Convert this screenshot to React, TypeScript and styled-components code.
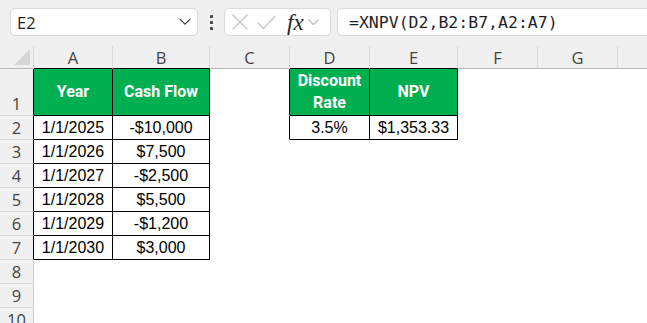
import React from "react";
import styled, { createGlobalStyle } from "styled-components";

const GlobalStyle = createGlobalStyle`
  html, body { margin: 0; padding: 0; background: #ffffff; }
  body { font-family: "Liberation Sans", Arial, sans-serif; }
  * { box-sizing: border-box; }
`;

const Page = styled.div`
  width: 647px;
  height: 323px;
  overflow: hidden;
  background: #ffffff;
  display: flex;
  flex-direction: column;
`;

const TopBar = styled.div`
  height: 46px;
  flex: none;
  background: #f0f0f0;
  display: flex;
  align-items: flex-start;
  padding: 8px 0 0 10px;
`;

const NameBox = styled.div`
  width: 188px;
  height: 28px;
  background: #ffffff;
  border: 1px solid #dadada;
  border-radius: 5px;
  display: flex;
  align-items: center;
  justify-content: space-between;
  padding: 0 6px 0 6px;
  font-family: "Open Sans", "Noto Sans", sans-serif;
  font-size: 16.5px;
  color: #1f1f1f;
`;

const Dots = styled.div`
  width: 26px;
  height: 28px;
  display: flex;
  flex-direction: column;
  align-items: center;
  justify-content: center;
  gap: 3px;
`;

const Dot = styled.span`
  width: 3px;
  height: 3px;
  background: #4a4a4a;
  border-radius: 0.5px;
`;

const FxBox = styled.div`
  width: 107px;
  height: 28px;
  background: #ffffff;
  border: 1px solid #dadada;
  border-radius: 5px;
  display: flex;
  align-items: center;
  padding: 0 4px 0 7px;
  gap: 9px;
`;

const FxText = styled.span`
  font-family: "Liberation Serif", "Times New Roman", serif;
  font-style: italic;
  font-weight: 400;
  font-size: 23px;
  color: #262626;
  line-height: 1;
  margin-left: 2px;
  margin-right: -5px;
`;

const FormulaBox = styled.div`
  flex: 1;
  height: 28px;
  margin-left: 6px;
  margin-right: -12px;
  background: #ffffff;
  border: 1px solid #dadada;
  border-radius: 5px;
  display: flex;
  align-items: center;
  padding-left: 11px;
  font-family: "DejaVu Sans Mono", "Liberation Mono", monospace;
  font-size: 16.5px;
  color: #1f1f1f;
`;

const Sheet = styled.div`
  display: grid;
  grid-template-columns: 34px 79px 97px 80px 80px 88px 80px 80px 80px;
  grid-template-rows: 23px 47px repeat(10, 24px);
`;

const Corner = styled.div`
  background: #f0f0f0;
  border-right: 1px solid #dadada;
  border-bottom: 1px solid #b8b8b8;
  display: flex;
  align-items: flex-end;
  justify-content: flex-end;
  padding: 0 3px 3px 0;
`;

const CornerMark = styled.span`
  width: 16px;
  height: 16px;
  background: #d6d6d6;
  clip-path: polygon(100% 0, 100% 100%, 0 100%);
`;

const ColHead = styled.div<{ $bottom: string }>`
  background: #f0f0f0;
  border-right: 1px solid #dadada;
  border-bottom: 1px solid ${(p) => p.$bottom};
  display: flex;
  align-items: center;
  justify-content: center;
  font-family: "Open Sans", "Noto Sans", sans-serif;
  font-size: 16.5px;
  color: #444444;
  padding-top: 1px;
`;

const RowHead = styled.div<{ $right: string }>`
  background: #f0f0f0;
  border-right: 1px solid ${(p) => p.$right};
  border-bottom: 1px solid #dcdcdc;
  display: flex;
  align-items: flex-end;
  justify-content: center;
  font-family: "Open Sans", "Noto Sans", sans-serif;
  font-size: 16.5px;
  line-height: 22px;
  color: #444444;
`;

const Cell = styled.div<{ $right?: string; $bottom?: string; $header?: boolean }>`
  border-right: 1px solid ${(p) => p.$right ?? "transparent"};
  border-bottom: 1px solid ${(p) => p.$bottom ?? "transparent"};
  background: ${(p) => (p.$header ? "#00b050" : "#ffffff")};
  color: ${(p) => (p.$header ? "#ffffff" : "#000000")};
  font-family: ${(p) =>
    p.$header ? `Roboto, "Liberation Sans", sans-serif` : `"Liberation Sans", Arial, sans-serif`};
  font-weight: ${(p) => (p.$header ? 700 : 400)};
  font-size: 16px;
  line-height: 22px;
  display: flex;
  align-items: center;
  justify-content: center;
  text-align: center;
  white-space: pre-line;
  padding-bottom: ${(p) => (p.$header ? "1px" : "0")};
`;

const Chevron = ({ color, size }: { color: string; size: number }) => (
  <svg width={size} height={size * 0.6} viewBox="0 0 12 7" fill="none">
    <path d="M1 1 L6 6 L11 1" stroke={color} strokeWidth="1.3" strokeLinecap="round" strokeLinejoin="round" />
  </svg>
);

const CrossIcon = () => (
  <svg width="16" height="16" viewBox="0 0 16 16" fill="none">
    <path d="M1 1 L15 15 M15 1 L1 15" stroke="#c4c4c4" strokeWidth="1.3" strokeLinecap="round" />
  </svg>
);

const CheckIcon = () => (
  <svg width="19" height="15" viewBox="0 0 19 15" fill="none">
    <path d="M1 8 L6.5 13.5 L18 1.5" stroke="#c4c4c4" strokeWidth="1.3" strokeLinecap="round" strokeLinejoin="round" />
  </svg>
);

const cols = ["A", "B", "C", "D", "E", "F", "G", "H"];
const BLACK = "#000000";

type CellData = { text: string; header?: boolean };
const content: Record<string, CellData> = {
  A1: { text: "Year", header: true },
  B1: { text: "Cash Flow", header: true },
  D1: { text: "Discount\nRate", header: true },
  E1: { text: "NPV", header: true },
  A2: { text: "1/1/2025" },
  B2: { text: "-$10,000" },
  D2: { text: "3.5%" },
  E2: { text: "$1,353.33" },
  A3: { text: "1/1/2026" },
  B3: { text: "$7,500" },
  A4: { text: "1/1/2027" },
  B4: { text: "-$2,500" },
  A5: { text: "1/1/2028" },
  B5: { text: "$5,500" },
  A6: { text: "1/1/2029" },
  B6: { text: "-$1,200" },
  A7: { text: "1/1/2030" },
  B7: { text: "$3,000" },
};

const inTable = (c: string, r: number) =>
  ((c === "A" || c === "B") && r >= 1 && r <= 7) ||
  ((c === "D" || c === "E") && r >= 1 && r <= 2);

export default function App() {
  const rows = Array.from({ length: 11 }, (_, i) => i + 1);
  return (
    <>
      <GlobalStyle />
      <Page>
        <TopBar>
          <NameBox>
            <span>E2</span>
            <Chevron color="#444444" size={12} />
          </NameBox>
          <Dots>
            <Dot />
            <Dot />
            <Dot />
          </Dots>
          <FxBox>
            <CrossIcon />
            <CheckIcon />
            <FxText>fx</FxText>
            <Chevron color="#b8b8b8" size={11} />
          </FxBox>
          <FormulaBox>=XNPV(D2,B2:B7,A2:A7)</FormulaBox>
        </TopBar>
        <Sheet>
          <Corner>
            <CornerMark />
          </Corner>
          {cols.map((c) => (
            <ColHead key={c} $bottom={inTable(c, 1) ? BLACK : "#b8b8b8"}>
              {c}
            </ColHead>
          ))}
          {rows.map((r) => (
            <React.Fragment key={r}>
              <RowHead $right={r <= 7 ? BLACK : "#cfcfcf"}>{r}</RowHead>
              {cols.map((c, ci) => {
                const key = `${c}${r}`;
                const d = content[key];
                const table = inTable(c, r);
                const nextInTable = ci + 1 < cols.length && inTable(cols[ci + 1], r);
                return (
                  <Cell
                    key={key}
                    $header={d?.header}
                    $right={table || nextInTable ? BLACK : undefined}
                    $bottom={table ? BLACK : undefined}
                  >
                    {d?.text ?? ""}
                  </Cell>
                );
              })}
            </React.Fragment>
          ))}
        </Sheet>
      </Page>
    </>
  );
}
